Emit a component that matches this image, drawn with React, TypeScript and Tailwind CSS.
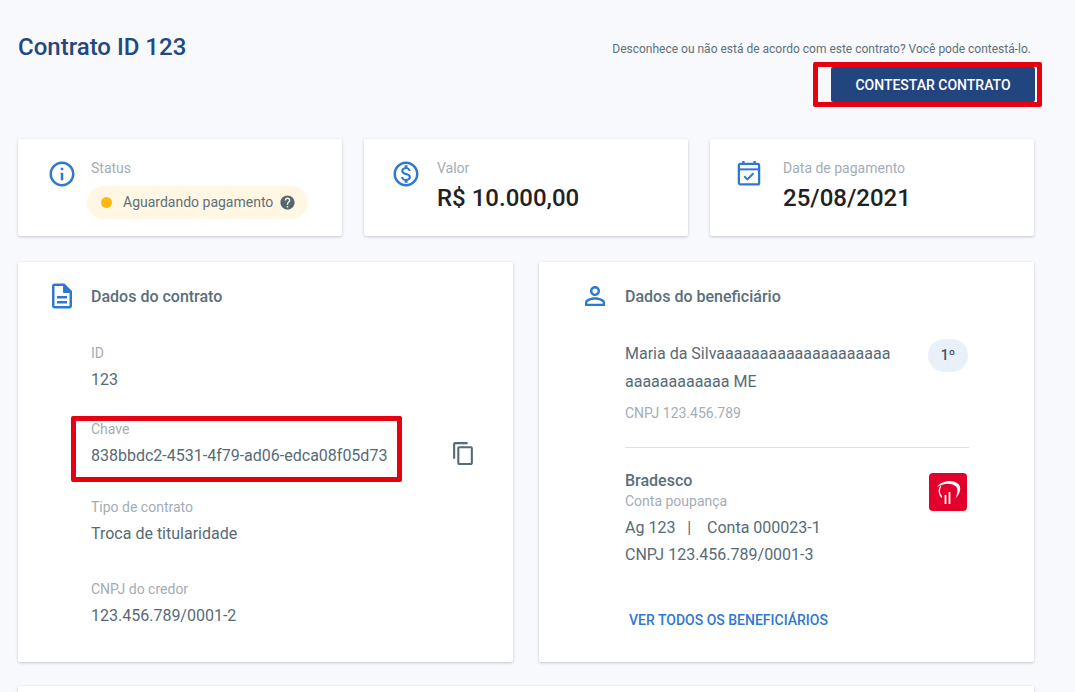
import React from "react";

const Icon = ({ d, className }: { d: string; className: string }) => (
  <svg viewBox="0 0 24 24" fill="currentColor" className={className} aria-hidden="true">
    <path d={d} />
  </svg>
);

const INFO = "M11 7h2v2h-2zm0 4h2v6h-2zm1-9C6.48 2 2 6.48 2 12s4.48 10 10 10 10-4.48 10-10S17.52 2 12 2zm0 18c-4.41 0-8-3.59-8-8s3.59-8 8-8 8 3.59 8 8-3.59 8-8 8z";
const MONEY = "M12 2C6.48 2 2 6.48 2 12s4.48 10 10 10 10-4.48 10-10S17.52 2 12 2zm0 18c-4.41 0-8-3.59-8-8s3.59-8 8-8 8 3.59 8 8-3.59 8-8 8zm.31-8.86c-1.77-.45-2.34-.94-2.34-1.67 0-.84.79-1.43 2.1-1.43 1.38 0 1.9.66 1.94 1.64h1.71c-.05-1.34-.87-2.57-2.49-2.97V5H10.9v1.69c-1.51.32-2.72 1.3-2.72 2.81 0 1.79 1.49 2.69 3.66 3.21 1.95.46 2.34 1.15 2.34 1.87 0 .53-.39 1.39-2.1 1.39-1.6 0-2.23-.72-2.32-1.64H8.04c.1 1.7 1.36 2.66 2.86 2.97V19h2.34v-1.67c1.52-.29 2.72-1.16 2.73-2.77-.01-2.2-1.9-2.96-3.66-3.42z";
const PERSON = "M12 5.900c1.160 0 2.100.940 2.100 2.100s-.940 2.100-2.100 2.100S9.900 9.160 9.900 8s.940-2.100 2.100-2.100m0 9c2.970 0 6.100 1.460 6.100 2.100v1.100H5.900V17c0-.640 3.130-2.100 6.100-2.100M12 4C9.790 4 8 5.790 8 8s1.790 4 4 4 4-1.790 4-4-1.790-4-4-4zm0 9c-2.670 0-8 1.340-8 4v3h16v-3c0-2.660-5.330-4-8-4z";
const HELP = "M12 2C6.48 2 2 6.48 2 12s4.48 10 10 10 10-4.48 10-10S17.52 2 12 2zm1 17h-2v-2h2v2zm2.07-7.75l-.9.92C13.45 12.9 13 13.5 13 15h-2v-.5c0-1.1.45-2.1 1.17-2.83l1.24-1.26c.37-.36.59-.86.59-1.41 0-1.1-.9-2-2-2s-2 .9-2 2H8c0-2.21 1.79-4 4-4s4 1.79 4 4c0 .88-.36 1.68-.93 2.25z";
const COPY = "M16 1H4c-1.1 0-2 .9-2 2v14h2V3h12V1zm3 4H8c-1.1 0-2 .9-2 2v14c0 1.1.9 2 2 2h11c1.1 0 2-.9 2-2V7c0-1.1-.9-2-2-2zm0 16H8V7h11v14z";

const CalendarIcon = ({ className }: { className: string }) => (
  <svg viewBox="0 0 24 24" fill="none" stroke="currentColor" className={className} aria-hidden="true">
    <rect x="3.900" y="3.900" width="16.200" height="16.400" rx="1.200" strokeWidth="1.800" />
    <path d="M3.900 8.300h16.200" strokeWidth="1.600" />
    <path d="M7.500 1.500v3M16.500 1.500v3" strokeWidth="1.900" />
    <path d="M8.200 13.800l2.500 2.500 4.900-4.900" strokeWidth="1.600" />
  </svg>
);

const DocIcon = ({ className }: { className: string }) => (
  <svg viewBox="0 0 24 24" fill="currentColor" className={className} aria-hidden="true">
    <path d="M8 16h8v2H8zm0-4h8v2H8zm6-10H6c-1.1 0-2 .9-2 2v16c0 1.100.89 2 1.990 2H18c1.100 0 2-.9 2-2V8l-6-6zm4 18H6V4h7v5h5v11z" />
    <path d="M13 3h1l5 5v1.500h-6z" />
  </svg>
);

const card = "bg-white rounded-[2px] shadow-[0_1px_3px_rgba(60,70,80,0.28)]";

const Field = ({ label, value, className }: { label: string; value: string; className: string }) => (
  <div className={className}>
    <div className="text-[14px] leading-[20px] text-[#a3adb5]">{label}</div>
    <div className="mt-[4px] text-[16px] leading-[26px] text-[#566b76]">{value}</div>
  </div>
);

const Summary = ({ icon, iconPad, textGap, label, children }: { icon: React.ReactNode; iconPad: string; textGap: string; label: string; children: React.ReactNode }) => (
  <div className={`${card} flex h-[97px] pt-[20px] ${iconPad}`}>
    {icon}
    <div className={`min-w-0 flex-1 ${textGap}`}>
      <div className="-mt-[1px] text-[14px] leading-[20px] text-[#a3adb5]">{label}</div>
      {children}
    </div>
  </div>
);

const Big = ({ children }: { children: React.ReactNode }) => (
  <div className="mt-[4px] text-[24px] font-medium leading-[32px] text-[#1f2224]">{children}</div>
);

const blueIcon = "h-[30px] w-[30px] shrink-0 text-[#2f78cf]";

export default function App() {
  return (
    <div className="h-[692px] overflow-hidden bg-[#f8f9fd] pl-[18px] pr-[41px] pt-[30px] font-['Roboto',sans-serif]">
      <header className="flex h-[109px] items-start justify-between">
        <h1 className="mt-[1px] text-[24px] font-medium leading-[32px] text-[#23477f]">Contrato ID 123</h1>
        <div className="relative flex flex-col items-end pr-[3px]">
          <p className="mt-[11px] text-[12px] leading-[16px] text-[#5f707a]">
            Desconhece ou não está de acordo com este contrato? Você pode contestá-lo.
          </p>
          <button className="-mr-[4px] mt-[10px] h-[35px] w-[204px] rounded-[2px] bg-[#23457f] pt-px text-[14px] font-medium text-white">
            CONTESTAR CONTRATO
          </button>
          <div className="pointer-events-none absolute bottom-[-5px] right-[-8px] h-[45px] w-[229px] rounded-[2px] border-[5px] border-[#e60012]" />
        </div>
      </header>

      <section className="grid grid-cols-3 gap-[22px]">
        <Summary icon={<Icon d={INFO} className={blueIcon} />} iconPad="pl-[29px]" textGap="ml-[14px]" label="Status">
          <div className="-ml-[4px] mt-[8px] flex h-[33px] w-[221px] items-center rounded-full bg-[#fff7e3] pl-[14px]">
            <span className="h-[11px] w-[11px] rounded-full bg-[#ffbb0d]" />
            <span className="ml-[11px] text-[14px] text-[#5f707a]">Aguardando pagamento</span>
            <Icon d={HELP} className="ml-[6px] h-[17px] w-[17px] text-[#546771]" />
          </div>
        </Summary>
        <Summary icon={<Icon d={MONEY} className={blueIcon} />} iconPad="pl-[27px]" textGap="ml-[16px]" label="Valor">
          <Big>R$ 10.000,00</Big>
        </Summary>
        <Summary icon={<CalendarIcon className={blueIcon} />} iconPad="pl-[24px]" textGap="ml-[19px]" label="Data de pagamento">
          <Big>25/08/2021</Big>
        </Summary>
      </section>

      <section className="mt-[26px] grid grid-cols-2 gap-[26px]">
        <div className={`${card} relative h-[400px] pl-[29px] pt-[19px]`}>
          <div className="flex items-center">
            <DocIcon className={blueIcon} />
            <h2 className="ml-[14px] pt-[1px] text-[16px] font-medium text-[#5a6e79]">Dados do contrato</h2>
          </div>
          <div className="ml-[44px]">
            <Field label="ID" value="123" className="mt-[32px]" />
            <Field label="Chave" value="838bbdc2-4531-4f79-ad06-edca08f05d73" className="mt-[26px]" />
            <Field label="Tipo de contrato" value="Troca de titularidade" className="mt-[28px]" />
            <Field label="CNPJ do credor" value="123.456.789/0001-2" className="mt-[32px]" />
          </div>
          <Icon d={COPY} className="absolute left-[433px] top-[179px] h-[25px] w-[25px] text-[#566b76]" />
          <div className="pointer-events-none absolute left-[53px] top-[154px] h-[66px] w-[331px] rounded-[2px] border-[5px] border-[#e60012]" />
        </div>

        <div className={`${card} h-[400px] pl-[41px] pr-[64px] pt-[19px]`}>
          <div className="flex items-center">
            <Icon d={PERSON} className={blueIcon} />
            <h2 className="ml-[15px] pt-[1px] text-[16px] font-medium text-[#5a6e79]">Dados do beneficiário</h2>
          </div>
          <div className="ml-[45px]">
            <div className="mt-[13px] flex items-start justify-between">
              <div className="mt-[16px] text-[16px] leading-[28px] text-[#566b76]">
                Maria da Silvaaaaaaaaaaaaaaaaaaaa
                <br />
                aaaaaaaaaaaa ME
              </div>
              <div className="mr-[2px] mt-[15px] flex h-[33px] w-[40px] items-center justify-center rounded-full bg-[#e8f0fa] text-[14px] font-medium text-[#3b5566]">
                1º
              </div>
            </div>
            <div className="mt-[7px] text-[14px] leading-[20px] text-[#a3adb5]">CNPJ 123.456.789</div>
            <div className="mt-[24px] h-px w-[344px] bg-[#dfe2e5]" />
            <div className="mt-[24px] flex items-start justify-between">
              <div>
                <div className="text-[16px] font-medium leading-[18px] text-[#5a6e79]">Bradesco</div>
                <div className="mt-[1px] text-[14px] leading-[20px] text-[#a3adb5]">Conta poupança</div>
                <div className="mt-[3px] whitespace-pre text-[16px] leading-[27px] text-[#566b76]">Ag 123   |    Conta 000023-1</div>
                <div className="text-[16px] leading-[27px] text-[#566b76]">CNPJ 123.456.789/0001-3</div>
              </div>
              <div className="mr-[3px] mt-[1px] flex h-[38px] w-[38px] items-center justify-center rounded-[4px] bg-[#e3002c]">
                <svg viewBox="0 0 38 38" className="h-[38px] w-[38px]" aria-hidden="true">
                  <path fill="white" d="M8 14C12 8 23 5.500 29.500 11c3 3.500 2 9-3 14.500 2-4.500 3-9.500.2-12.200C21.500 9 14 10.500 8 14z" />
                  <path fill="none" stroke="white" strokeWidth="1.300" strokeLinecap="round" d="M11.500 13.500c-2 3.500-1.500 7 1 10.500" />
                  <path fill="none" stroke="white" strokeWidth="1.800" d="M16.500 22v9M20.500 19v12" />
                </svg>
              </div>
            </div>
            <a className="ml-[4px] mt-[42px] block text-[14px] font-medium leading-[20px] text-[#2f78cf]">VER TODOS OS BENEFICIÁRIOS</a>
          </div>
        </div>
      </section>

      <section className={`${card} mt-[24px] h-[200px]`} />
    </div>
  );
}
